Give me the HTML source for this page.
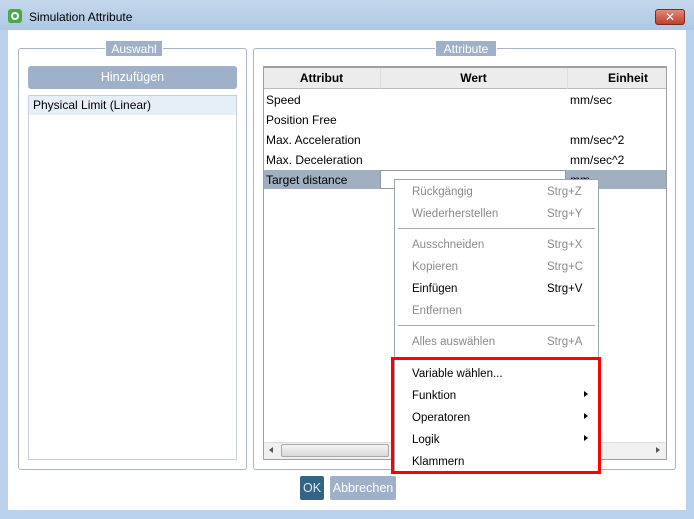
<!DOCTYPE html><html><head><style>
*{margin:0;padding:0;box-sizing:border-box}
body{width:694px;height:519px;background:#b9d1ea;font-family:"Liberation Sans","DejaVu Sans",sans-serif;font-size:12px;position:relative;overflow:hidden;color:#000}
.a{position:absolute}
.t{white-space:nowrap}
.mi{position:absolute;left:412px;white-space:nowrap;font-size:11.5px}
.sc{position:absolute;left:547px;font-size:11.5px}
.g{color:#8a8a8a}
</style></head><body>
<div class="a" style="left:0;top:0;width:694px;height:30px;background:linear-gradient(#c5d8ec,#aec8e4)"></div>
<div class="a" style="left:8px;top:9px;width:14px;height:14px;background:#4aa848;border-radius:3px"><div class="a" style="left:3px;top:3px;width:8px;height:8px;border:2px solid #fff;border-radius:50%"></div></div>
<div class="a t" style="left:29px;top:10px;font-size:12px">Simulation Attribute</div>
<div class="a" style="left:655px;top:9px;width:30px;height:16px;background:linear-gradient(#e08a78,#c0402c);border:1px solid #7a2a20;border-radius:3px;color:#fff;text-align:center;font-weight:bold;font-size:12px;line-height:14px">✕</div>
<div class="a" style="left:8px;top:30px;width:678px;height:480px;background:#fff"></div>
<div class="a" style="left:18px;top:48px;width:229px;height:422px;border:1px solid #a7b5c6;border-radius:3px"></div>
<div class="a t" style="left:105px;top:40px;width:58px;height:17px;background:#9fb1c8;color:#fff;text-align:center;line-height:17px;border:1px solid #fff">Auswahl</div>
<div class="a" style="left:28px;top:66px;width:209px;height:23px;background:#9fb1c8;border-radius:3px;color:#fff;text-align:center;line-height:23px;font-size:12.5px">Hinzufügen</div>
<div class="a" style="left:28px;top:95px;width:209px;height:365px;border:1px solid #c8ced6"></div>
<div class="a t" style="left:29px;top:96px;width:207px;height:19px;background:#e6eef8;padding-left:4px;line-height:18px">Physical Limit (Linear)</div>
<div class="a" style="left:253px;top:48px;width:423px;height:422px;border:1px solid #a7b5c6;border-radius:3px"></div>
<div class="a t" style="left:435px;top:40px;width:62px;height:17px;background:#9fb1c8;color:#fff;text-align:center;line-height:17px;border:1px solid #fff">Attribute</div>
<div class="a" style="left:263px;top:66px;width:404px;height:394px;border:1px solid #a0a0a0;border-top:2px solid #a0a0a0"></div>
<div class="a" style="left:264px;top:68px;width:402px;height:21px;background:#ececec;border-bottom:1px solid #bbb"></div>
<div class="a" style="left:380px;top:68px;width:1px;height:21px;background:#ddd"></div>
<div class="a" style="left:567px;top:68px;width:1px;height:21px;background:#ddd"></div>
<div class="a t" style="left:263px;top:71px;width:117px;text-align:center;font-weight:bold">Attribut</div>
<div class="a t" style="left:380px;top:71px;width:187px;text-align:center;font-weight:bold">Wert</div>
<div class="a t" style="left:608px;top:71px;font-weight:bold">Einheit</div>
<div class="a" style="left:264px;top:170px;width:402px;height:19px;background:#a0afc2"></div>
<div class="a" style="left:380px;top:170px;width:186px;height:19px;background:#fff;border:1px solid #8a98aa"></div>
<div class="a t" style="left:266px;top:93px">Speed</div><div class="a t" style="left:570px;top:93px">mm/sec</div>
<div class="a t" style="left:266px;top:113px">Position Free</div>
<div class="a t" style="left:266px;top:133px">Max. Acceleration</div><div class="a t" style="left:570px;top:133px">mm/sec^2</div>
<div class="a t" style="left:266px;top:153px">Max. Deceleration</div><div class="a t" style="left:570px;top:153px">mm/sec^2</div>
<div class="a t" style="left:266px;top:173px">Target distance</div><div class="a t" style="left:570px;top:173px">mm</div>
<div class="a" style="left:264px;top:442px;width:402px;height:17px;background:#f0f0f0;border-top:1px solid #ddd"></div>
<div class="a" style="left:281px;top:444px;width:108px;height:13px;background:linear-gradient(#f4f4f4,#d8d8d8);border:1px solid #aaa;border-radius:2px"></div>
<div class="a" style="left:269px;top:447px;width:0;height:0;border:3px solid transparent;border-right:4px solid #555;border-left:0"></div>
<div class="a" style="left:656px;top:447px;width:0;height:0;border:3px solid transparent;border-left:4px solid #555;border-right:0"></div>
<div class="a" style="left:394px;top:179px;width:205px;height:293px;background:#fff;border:1px solid #9aa4b0"></div>
<div class="mi g" style="top:186px">Rückgängig</div><div class="sc g" style="top:186px">Strg+Z</div>
<div class="mi g" style="top:208px">Wiederherstellen</div><div class="sc g" style="top:208px">Strg+Y</div>
<div class="a" style="left:398px;top:228px;width:197px;height:1px;background:#aaa"></div>
<div class="mi g" style="top:239px">Ausschneiden</div><div class="sc g" style="top:239px">Strg+X</div>
<div class="mi g" style="top:261px">Kopieren</div><div class="sc g" style="top:261px">Strg+C</div>
<div class="mi" style="top:283px">Einfügen</div><div class="sc" style="top:283px">Strg+V</div>
<div class="mi g" style="top:305px">Entfernen</div>
<div class="a" style="left:398px;top:325px;width:197px;height:1px;background:#aaa"></div>
<div class="mi g" style="top:336px">Alles auswählen</div><div class="sc g" style="top:336px">Strg+A</div>
<div class="a" style="left:391px;top:357px;width:210px;height:117px;border:3px solid #f00"></div>
<div class="mi" style="top:368px">Variable wählen...</div>
<div class="mi" style="top:390px">Funktion</div>
<div class="mi" style="top:412px">Operatoren</div>
<div class="mi" style="top:434px">Logik</div>
<div class="mi" style="top:456px">Klammern</div>
<div class="a" style="left:584px;top:391px;border:3.5px solid transparent;border-left:4px solid #000;border-right:0"></div>
<div class="a" style="left:584px;top:413px;border:3.5px solid transparent;border-left:4px solid #000;border-right:0"></div>
<div class="a" style="left:584px;top:435px;border:3.5px solid transparent;border-left:4px solid #000;border-right:0"></div>
<div class="a" style="left:300px;top:476px;width:24px;height:24px;background:#336385;border-radius:2px;color:#dfe8f0;text-align:center;line-height:24px;font-size:12.5px">OK</div>
<div class="a" style="left:330px;top:476px;width:66px;height:24px;background:#9fb1c8;border-radius:2px;color:#fff;text-align:center;line-height:24px;font-size:12.5px">Abbrechen</div>
</body></html>
